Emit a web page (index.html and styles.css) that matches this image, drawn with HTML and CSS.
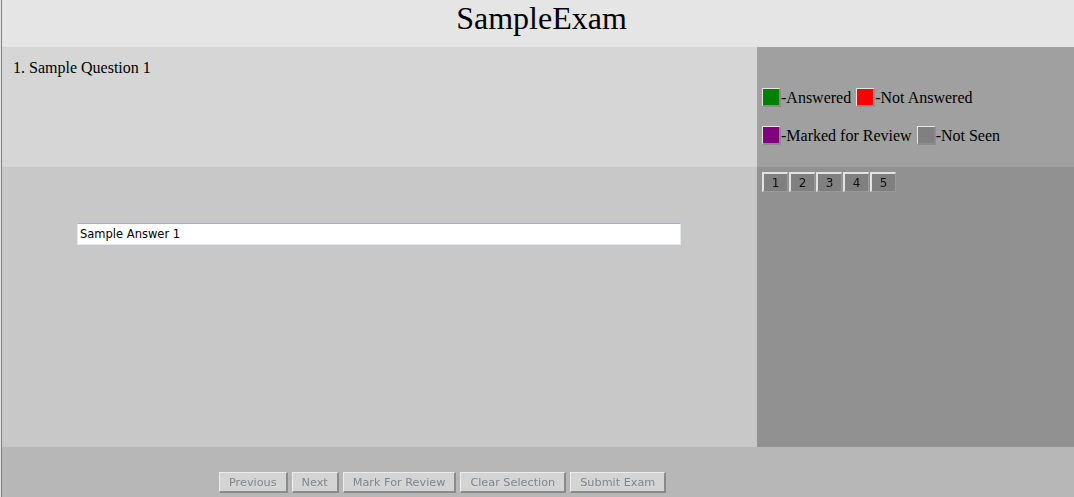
FILE: index.html
```html
<!DOCTYPE html>
<html>
<head>
<meta charset="utf-8">
<title>SampleExam</title>
<link rel="stylesheet" href="styles.css">
</head>
<body>
<div class="page">
  <header class="header">SampleExam</header>
  <section class="question">1. Sample Question 1</section>
  <aside class="legend">
    <div class="legend-row">
      <span class="swatch answered"></span><span>-Answered</span><span class="sep"></span><span class="swatch not-answered"></span><span>-Not Answered</span>
    </div>
    <div class="legend-row">
      <span class="swatch review"></span><span>-Marked for Review</span><span class="sep"></span><span class="swatch not-seen"></span><span>-Not Seen</span>
    </div>
  </aside>
  <section class="answer">
    <input class="answer-input" type="text" value="Sample Answer 1" autofocus>
  </section>
  <nav class="palette">
    <div class="palette-grid">
      <button class="qnum">1</button>
      <button class="qnum">2</button>
      <button class="qnum">3</button>
      <button class="qnum">4</button>
      <button class="qnum">5</button>
    </div>
  </nav>
  <footer class="footer">
    <button class="action" disabled>Previous</button>
    <button class="action" disabled>Next</button>
    <button class="action" disabled>Mark For Review</button>
    <button class="action" disabled>Clear Selection</button>
    <button class="action" disabled>Submit Exam</button>
  </footer>
</div>
</body>
</html>
```

FILE: styles.css
```css
html, body {
  margin: 0;
  padding: 0;
  height: 100%;
  overflow: hidden;
}
body {
  background: #e5e5e5;
  font-family: "Liberation Serif", "Times New Roman", serif;
  color: #000;
}
.page {
  margin-left: 1px;
  border-left: 1px solid #7f7f7f;
  display: grid;
  grid-template-columns: 755px 317px;
  grid-template-rows: 47px 120px 280px 50px;
}
.header {
  grid-column: 1 / 3;
  background: #e5e5e5;
  font-size: 32px;
  line-height: 36px;
  text-align: center;
  padding-left: 7px;
}
.question {
  background: #d6d6d6;
  font-size: 16px;
  padding: 12px 0 0 11px;
}
.legend {
  background: #a0a0a0;
  font-size: 16px;
  padding: 41px 0 0 5px;
  display: flex;
  flex-direction: column;
  gap: 19px;
}
.legend-row {
  display: flex;
  align-items: center;
  height: 19px;
  white-space: pre;
}
.sep {
  width: 5px;
}
.swatch {
  display: inline-block;
  box-sizing: border-box;
  width: 19px;
  height: 19px;
  border-style: solid;
  border-width: 1px 2px 2px 1px;
  border-color: #e6e6e6 #8c8c8c #8c8c8c #e6e6e6;
}
.answered { background: #008000; }
.not-answered { background: #ff0000; }
.review { background: #800080; }
.not-seen { background: #808080; }
.answer {
  background: #c8c8c8;
  padding: 56px 0 0 75px;
}
.answer-input {
  box-sizing: border-box;
  width: 604px;
  height: 22px;
  margin: 0;
  padding: 0 2px;
  border: 1px solid #e3e9ef;
  border-top-color: #abadb3;
  background: #fff;
  font-family: "DejaVu Sans", Verdana, sans-serif;
  font-size: 11.5px;
  color: #000;
  outline: none;
  caret-color: #000;
}
.palette {
  background: #919191;
  padding: 5px 0 0 5px;
}
.palette-grid {
  display: flex;
  gap: 1px;
}
.qnum {
  box-sizing: border-box;
  width: 26px;
  height: 20px;
  margin: 0;
  padding: 0;
  background: #808080;
  border-style: solid;
  border-width: 2px 1px 1px 2px;
  border-color: #e2e2e2 #9a9a9a #9a9a9a #e2e2e2;
  font-family: "DejaVu Sans", Verdana, sans-serif;
  font-size: 12px;
  color: #111;
}
.footer {
  grid-column: 1 / 3;
  background: #b7b7b7;
  padding: 25px 0 0 217px;
  display: flex;
  gap: 4px;
  align-items: flex-start;
}
.action {
  box-sizing: border-box;
  height: 21px;
  margin: 0;
  padding: 0 9px;
  background: #d4d4d4;
  border-style: solid;
  border-width: 1px 2px 2px 1px;
  border-color: #ececec #8a8a8a #8a8a8a #ececec;
  font-family: "DejaVu Sans", Verdana, sans-serif;
  font-size: 11.25px;
  color: #7d8790;
}
```
